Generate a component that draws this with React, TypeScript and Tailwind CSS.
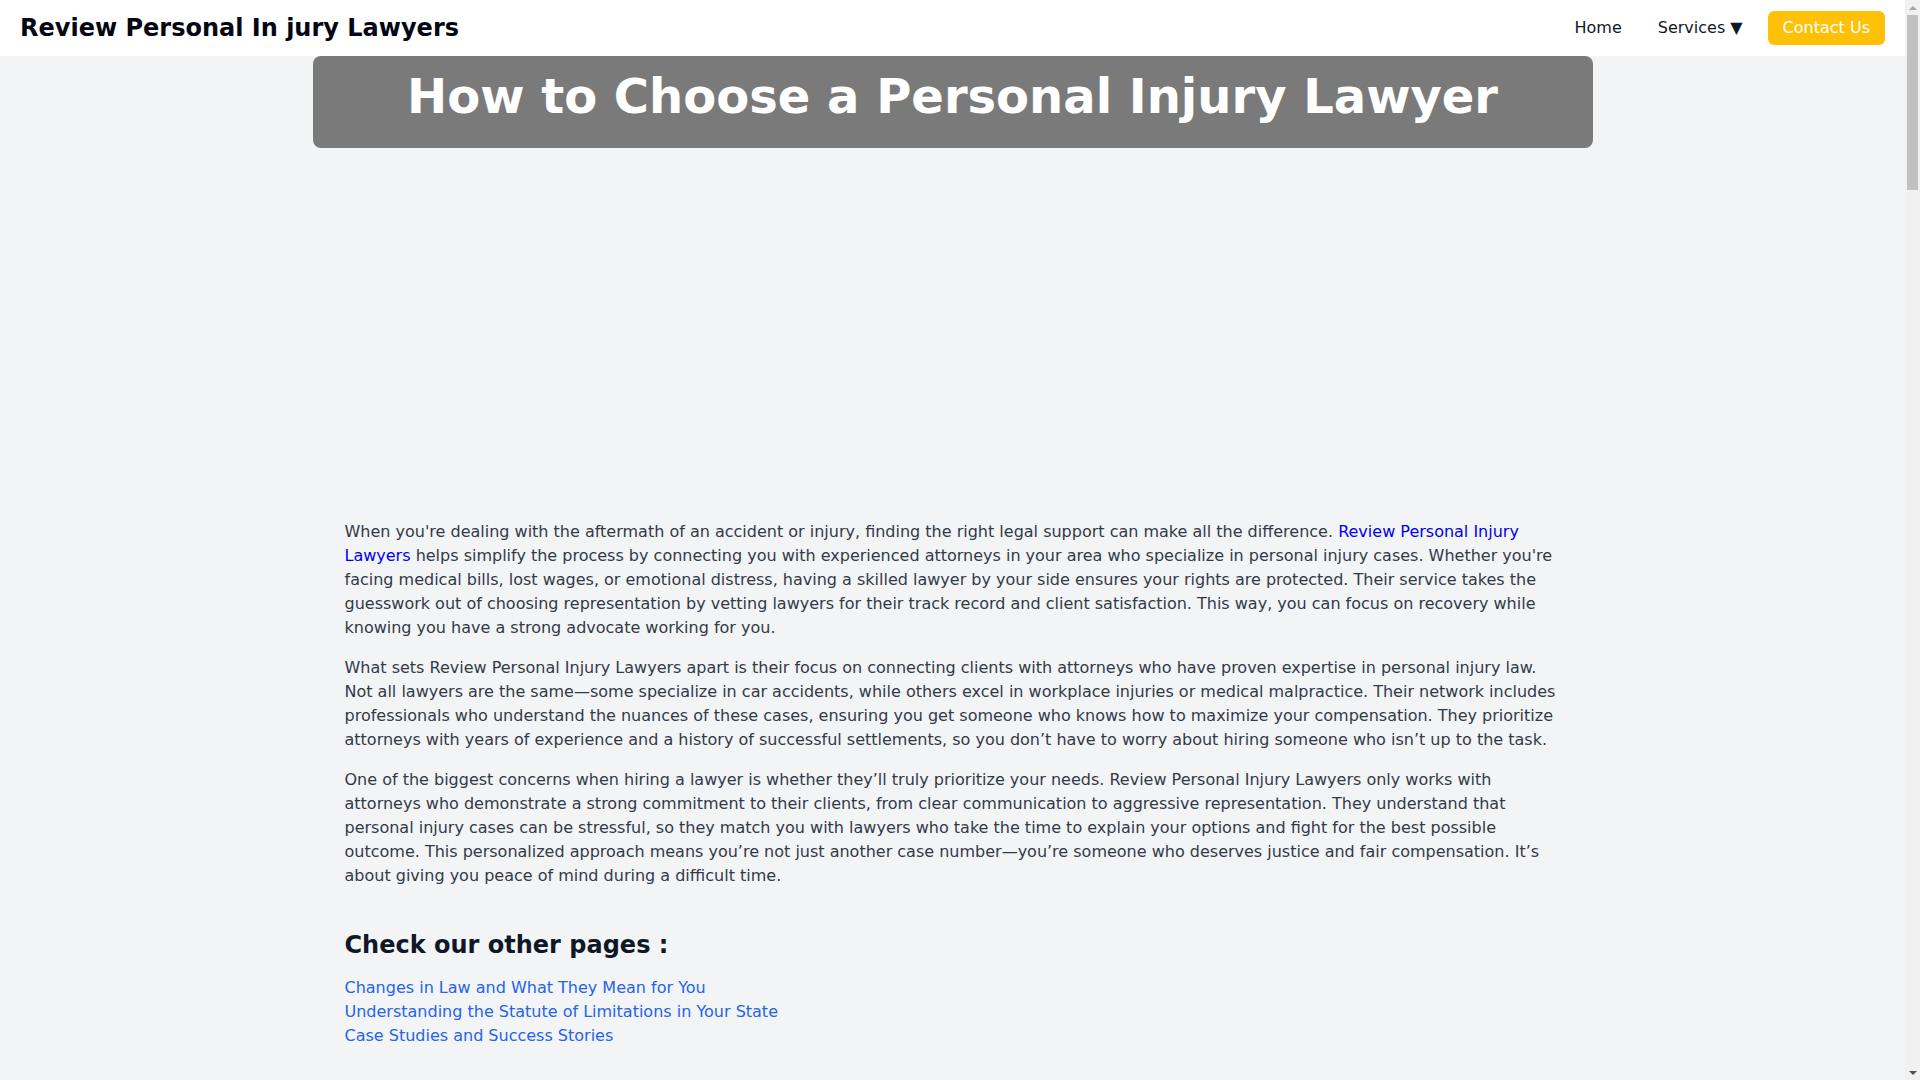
import React from 'react';

const otherPages = [
  'Changes in Law and What They Mean for You',
  'Understanding the Statute of Limitations in Your State',
  'Case Studies and Success Stories',
];

const Navbar: React.FC = () => (
  <header className="h-14 bg-white flex items-center justify-between px-5">
    <a href="#" className="text-2xl font-bold text-gray-950">
      Review Personal In jury Lawyers
    </a>
    <nav className="flex items-center">
      <a href="#" className="text-base text-gray-900 mr-9">
        Home
      </a>
      <button className="text-base text-gray-900 mr-[25px]">Services ▼</button>
      <a href="#" className="h-[34px] px-[15px] flex items-center rounded-md bg-[#ffc107] text-white text-base">
        Contact Us
      </a>
    </nav>
  </header>
);

const Scrollbar: React.FC = () => (
  <aside className="w-[15px] shrink-0 bg-[#f1f1f1] flex flex-col items-center">
    <div className="h-[15px] flex items-center justify-center">
      <div className="w-0 h-0 border-x-[4px] border-x-transparent border-b-[4px] border-b-[#a3a3a3]" />
    </div>
    <div className="w-[11px] h-[175px] bg-[#c1c1c1]" />
    <div className="flex-1" />
    <div className="h-[15px] flex items-center justify-center">
      <div className="w-0 h-0 border-x-[4px] border-x-transparent border-t-[4px] border-t-[#505050]" />
    </div>
  </aside>
);

export default function App() {
  return (
    <div className="h-screen flex overflow-hidden" style={{ fontFamily: '"DejaVu Sans", Verdana, sans-serif' }}>
      <div className="flex-1 min-w-0 bg-[#f3f4f6]">
        <Navbar />

        <main className="max-w-7xl mx-auto pb-16">
          {/* Hero title */}
          <div className="bg-[#7a7a7a] rounded-lg pt-4 pb-7 text-center">
            <h1 className="text-5xl leading-none font-bold text-white">How to Choose a Personal Injury Lawyer</h1>
          </div>

          {/* Empty media slot */}
          <div className="h-[372px]" />

          <article className="px-8 text-base leading-6 text-[#323a48]">
            <div className="space-y-4">
              <p>
                When you're dealing with the aftermath of an accident or injury, finding the right legal support can make
                all the difference.{' '}
                <a href="#" className="text-[#0000ee]">
                  Review Personal Injury Lawyers
                </a>{' '}
                helps simplify the process by connecting you with experienced attorneys in your area who specialize in
                personal injury cases. Whether you're facing medical bills, lost wages, or emotional distress, having a
                skilled lawyer by your side ensures your rights are protected. Their service takes the guesswork out of
                choosing representation by vetting lawyers for their track record and client satisfaction. This way, you
                can focus on recovery while knowing you have a strong advocate working for you.
              </p>
              <p>
                What sets Review Personal Injury Lawyers apart is their focus on connecting clients with attorneys who
                have proven expertise in personal injury law. Not all lawyers are the same—some specialize in car
                accidents, while others excel in workplace injuries or medical malpractice. Their network includes
                professionals who understand the nuances of these cases, ensuring you get someone who knows how to
                maximize your compensation. They prioritize attorneys with years of experience and a history of
                successful settlements, so you don’t have to worry about hiring someone who isn’t up to the task.
              </p>
              <p>
                One of the biggest concerns when hiring a lawyer is whether they’ll truly prioritize your needs. Review
                Personal Injury Lawyers only works with attorneys who demonstrate a strong commitment to their clients,
                from clear communication to aggressive representation. They understand that personal injury cases can be
                stressful, so they match you with lawyers who take the time to explain your options and fight for the
                best possible outcome. This personalized approach means you’re not just another case number—you’re
                someone who deserves justice and fair compensation. It’s about giving you peace of mind during a
                difficult time.
              </p>
            </div>

            <h2 className="mt-[41px] mb-[15px] text-2xl font-bold text-gray-900">Check our other pages :</h2>
            <ul>
              {otherPages.map((page) => (
                <li key={page}>
                  <a href="#" className="text-[#2563eb]">
                    {page}
                  </a>
                </li>
              ))}
            </ul>
          </article>
        </main>
      </div>
      <Scrollbar />
    </div>
  );
}
